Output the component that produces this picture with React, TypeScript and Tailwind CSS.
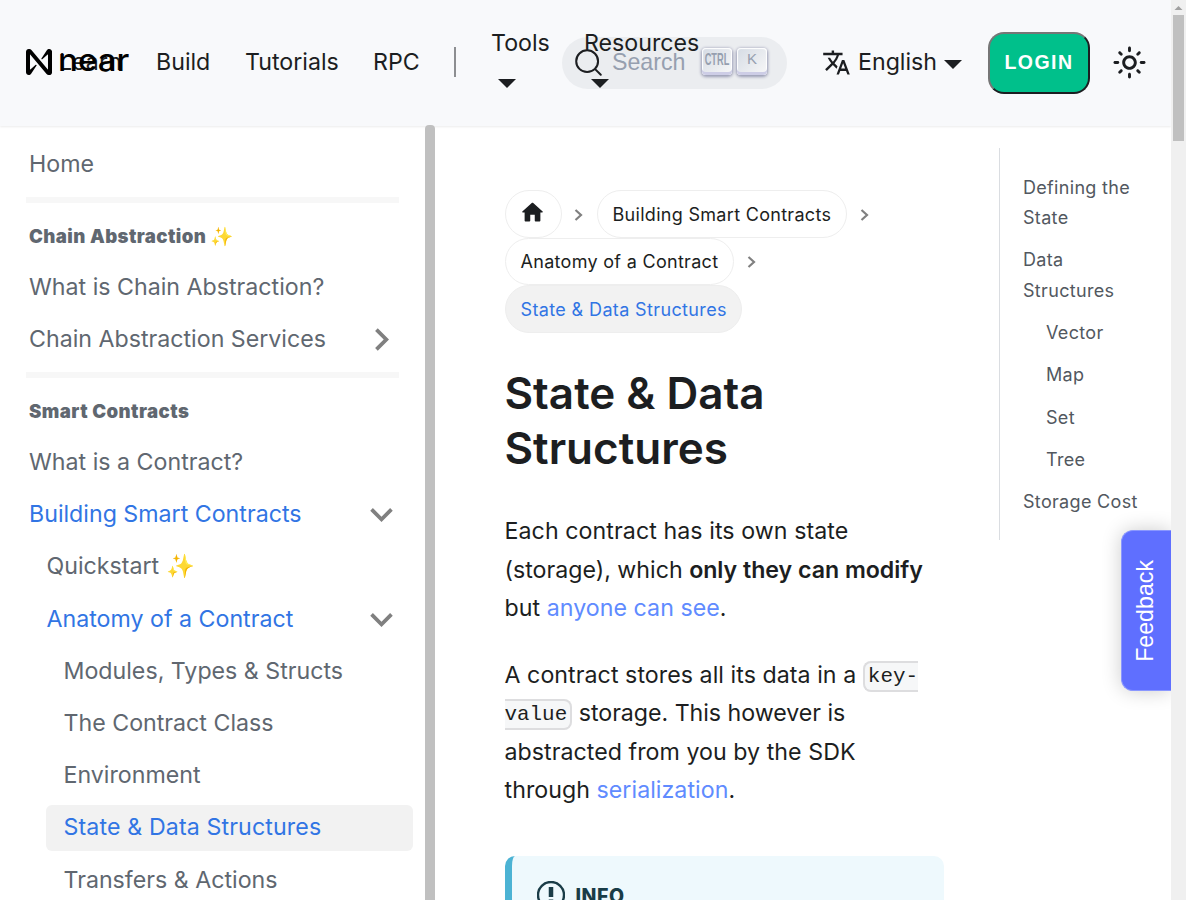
import type { ReactNode } from "react";

function Caret({ className = "" }: { className?: string }) {
  return (
    <svg className={className} width="18" height="9" viewBox="0 0 18 9" fill="#1c1e21">
      <path d="M0 0h18L9 9z" />
    </svg>
  );
}

function Chevron({ down = false }: { down?: boolean }) {
  return (
    <svg className={down ? "shrink-0 rotate-90" : "shrink-0"} width="45" height="45" viewBox="0 0 24 24" fill="#808080">
      <path d="M8.59 16.59 13.17 12 8.59 7.41 10 6l6 6-6 6z" />
    </svg>
  );
}

function NearMark() {
  return (
    <svg className="shrink-0" width="26" height="26" viewBox="0 0 90 90" fill="#000">
      <path d="M72.2 4.6 53.4 32.5c-1.3 1.9 1.2 4.2 3 2.6L74.9 19c.5-.4 1.2-.1 1.2.6v50.3c0 .7-.9 1-1.3.5l-56-67C17 1.2 14.4 0 11.5 0h-2C4.3 0 0 4.3 0 9.6v70.8C0 85.7 4.3 90 9.6 90c3.3 0 6.4-1.7 8.2-4.6l18.8-27.9c1.3-1.9-1.2-4.2-3-2.6l-18.5 16c-.5.4-1.2.1-1.2-.6V20.1c0-.7.9-1 1.3-.5l56 67c1.8 2.2 4.5 3.4 7.3 3.4h2c5.3 0 9.6-4.3 9.6-9.6V9.6c0-5.3-4.3-9.6-9.6-9.6-3.4 0-6.5 1.7-8.3 4.6z" />
    </svg>
  );
}

function Key({ children }: { children: ReactNode }) {
  return (
    <span className="flex h-[27px] w-[30px] items-center justify-center rounded-[4px] bg-[linear-gradient(-225deg,#d5dbe4,#f8f8f8)] pb-[3px] text-[#969faf] shadow-[inset_0_-3px_0_0_#cdcde6,inset_0_0_1px_1px_#fff,0_1px_3px_1px_rgba(30,35,90,0.4)]">
      {children}
    </span>
  );
}

function Header() {
  return (
    <header className="relative z-10 flex h-[126px] shrink-0 items-center bg-[#f8f9fb] pb-[2px] text-[23.2px] leading-[38px] text-[#1c1e21] shadow-[0_1px_2px_0_rgba(0,0,0,0.08)]">
      <div className="ml-[26px] flex w-[130px] items-center">
        <NearMark />
        <span className="relative ml-[6px] w-[98px]">
          <span className="block pl-[1px]">Learn</span>
          <span className="absolute -top-[2px] left-0 origin-left scale-x-[1.05] text-[31.5px] font-medium text-black">near</span>
        </span>
      </div>
      <a className="w-[89px] shrink-0">Build</a>
      <a className="w-[128px] shrink-0">Tutorials</a>
      <a className="w-[81px] shrink-0">RPC</a>
      <span className="h-[30px] w-[2px] shrink-0 bg-[#8d8e91]" />
      <a className="relative z-10 mt-[4px] ml-[35px] flex h-[80px] w-[93px] shrink-0 flex-col">
        Tools
        <Caret className="mt-[17px] ml-[7px]" />
      </a>
      <a className="relative z-10 mt-[4px] flex h-[80px] w-[116px] shrink-0 flex-col">
        Resources
        <Caret className="mt-[17px] ml-[7px]" />
      </a>
      <button className="mt-[2px] -ml-[138px] flex h-[52px] w-[225px] shrink-0 items-center rounded-full bg-[#ebedf0] pb-[2px] pl-[12px] font-['Liberation_Sans']">
        <svg width="29" height="29" viewBox="0 0 20 20" fill="none" stroke="#1c1e21" strokeWidth="1.4">
          <path d="M14.386 14.386l4.0877 4.0877-4.0877-4.0877c-2.9418 2.9419-7.7115 2.9419-10.6533 0-2.9419-2.9418-2.9419-7.7115 0-10.6533 2.9418-2.9419 7.7115-2.9419 10.6533 0 2.9419 2.9418 2.9419 7.7115 0 10.6533z" strokeLinecap="round" strokeLinejoin="round" />
        </svg>
        <span className="ml-[9px] w-[90px] text-left text-[#969faf]">Search</span>
        <span className="-mt-[2px] flex gap-[5px]">
          <Key><span className="-mt-[2px] scale-x-[0.56] text-[16.500px] font-bold">CTRL</span></Key>
          <Key><span className="-mt-[2px] text-[15px]">K</span></Key>
        </span>
      </button>
      <a className="ml-[35px] flex shrink-0 items-center">
        <svg width="29" height="29" viewBox="0 0 24 24" fill="#1c1e21">
          <path d="M12.87 15.07l-2.54-2.51.03-.03c1.74-1.94 2.98-4.17 3.71-6.53H17V4h-7V2H8v2H1v1.99h11.17C11.5 7.92 10.44 9.75 9 11.35 8.07 10.32 7.3 9.19 6.69 8h-2c.73 1.63 1.73 3.17 2.98 4.56l-5.09 5.02L4 19l5-5 3.11 3.11.76-2.04zM18.5 10h-2L12 22h2l1.12-3h4.75L21 22h2l-4.5-12zm-2.62 7l1.62-4.33L19.12 17h-3.24z" />
        </svg>
        <span className="ml-[7px] w-[86px]">English</span>
        <Caret className="mt-[4px]" />
      </a>
      <button className="mt-[2px] ml-[26px] h-[62px] w-[102px] shrink-0 rounded-[16px] border-2 border-t-[#767676] border-r-[#1c1e21] border-b-[#1c1e21] border-l-[#767676] bg-[#00c08b] pb-[2px] font-['Liberation_Sans'] text-[19.5px] font-bold tracking-[1.5px] text-white">LOGIN</button>
      <svg className="ml-[22px] shrink-0" width="35" height="35" viewBox="0 0 24 24" fill="#1c1e21">
        <path d="M12,9c1.65,0,3,1.35,3,3s-1.35,3-3,3s-3-1.35-3-3S10.35,9,12,9 M12,7c-2.76,0-5,2.24-5,5s2.24,5,5,5s5-2.24,5-5 S14.76,7,12,7L12,7z M2,13l2,0c0.55,0,1-0.45,1-1s-0.45-1-1-1l-2,0c-0.55,0-1,0.45-1,1S1.45,13,2,13z M20,13l2,0c0.55,0,1-0.45,1-1 s-0.45-1-1-1l-2,0c-0.55,0-1,0.45-1,1S19.45,13,20,13z M11,2v2c0,0.55,0.45,1,1,1s1-0.45,1-1V2c0-0.55-0.45-1-1-1S11,1.45,11,2z M11,20v2c0,0.55,0.45,1,1,1s1-0.45,1-1v-2c0-0.55-0.45-1-1-1C11.45,19,11,19.45,11,20z M5.99,4.58c-0.39-0.39-1.03-0.39-1.41,0 c-0.39,0.39-0.39,1.03,0,1.41l1.06,1.06c0.39,0.39,1.03,0.39,1.41,0s0.39-1.03,0-1.41L5.99,4.58z M18.36,16.95 c-0.39-0.39-1.03-0.39-1.41,0c-0.39,0.39-0.39,1.03,0,1.41l1.06,1.06c0.39,0.39,1.03,0.39,1.41,0c0.39-0.39,0.39-1.03,0-1.41 L18.36,16.95z M19.42,5.99c0.39-0.39,0.39-1.03,0-1.41c-0.39-0.39-1.03-0.39-1.41,0l-1.06,1.06c-0.39,0.39-0.39,1.03,0,1.41 s1.03,0.39,1.41,0L19.42,5.99z M7.05,18.36c0.39-0.39,0.39-1.03,0-1.41c-0.39-0.39-1.03-0.39-1.41,0l-1.06,1.06 c-0.39,0.39-0.39,1.03,0,1.41s1.03,0.39,1.41,0L7.05,18.36z" />
      </svg>
    </header>
  );
}

type RowProps = { children: ReactNode; level?: number; active?: boolean; icon?: "right" | "down"; selected?: boolean };

function Row({ children, level = 0, active, icon, selected }: RowProps) {
  const indent = level === 0 ? "pl-[29px]" : level === 1 ? "pl-[46.5px]" : selected ? "ml-[46px] pl-[17.5px]" : "pl-[63.5px]";
  return (
    <li className={`mb-[5.9px] flex h-[46.3px] items-center justify-between rounded-[6px] pr-[8.5px] ${indent} ${active ? "text-[#3175e4]" : "text-[#606770]"} ${selected ? "-mr-[1px] bg-[#f2f2f2] tracking-[0.12px]" : ""}`}>
      <span className="whitespace-nowrap">{children}</span>
      {icon && <Chevron down={icon === "down"} />}
    </li>
  );
}

function Divider() {
  return <li className="mr-[13.5px] ml-[26px] h-[6px] bg-[#f7f7f7]" />;
}

function Heading({ children }: { children: ReactNode }) {
  return <li className="flex h-[61px] items-center pt-[5px] pl-[29px] text-[18.6px] font-black tracking-[0.43px] text-[#606770]">{children}</li>;
}

function Sidebar() {
  return (
    <aside className="relative z-20 flex h-full w-[435px] shrink-0 overflow-hidden">
      <ul className="w-[425px] pt-[16px] pr-[13px] text-[23.2px] leading-[29px]">
        <li className="mb-[10px] flex h-[46px] items-center pl-[29px] text-[#606770]">Home</li>
        <Divider />
        <Heading>Chain Abstraction ✨</Heading>
        <Row>What is Chain Abstraction?</Row>
        <Row icon="right">Chain Abstraction Services</Row>
        <li className="h-[4px]" />
        <Divider />
        <Heading>Smart Contracts</Heading>
        <Row>What is a Contract?</Row>
        <Row active icon="down">Building Smart Contracts</Row>
        <Row level={1}>Quickstart ✨</Row>
        <Row level={1} active icon="down">Anatomy of a Contract</Row>
        <Row level={2}>Modules, Types &amp; Structs</Row>
        <Row level={2}>The Contract Class</Row>
        <Row level={2}>Environment</Row>
        <Row level={2} active selected>State &amp; Data Structures</Row>
        <Row level={2}>Transfers &amp; Actions</Row>
      </ul>
      <div className="w-[10px] rounded-t-[4px] bg-[#c0c0c0]" />
    </aside>
  );
}

function Separator() {
  return (
    <svg width="9" height="12" viewBox="0 0 9 12" fill="none" stroke="#808080" strokeWidth="2.2">
      <path d="M1.5 1 7 6l-5.5 5" />
    </svg>
  );
}

function Crumbs() {
  const pill = "flex h-[47.5px] items-center rounded-full border border-[#eeeeee] pt-[2px] pl-[14.5px] pr-[14.5px]";
  return (
    <nav className="flex flex-col text-[18px] tracking-[0.3px]">
      <div className="flex items-center">
        <a className={`${pill} w-[57px] justify-center`}>
          <svg className="-mt-[4px] -ml-[2px] shrink-0" width="27" height="27" viewBox="0 0 24 24" fill="#1c1e21">
            <path d="M10 19v-5h4v5c0 .55.45 1 1 1h3c.55 0 1-.45 1-1v-7h1.7c.46 0 .68-.57.33-.87L12.67 3.6c-.38-.34-.96-.34-1.34 0l-8.36 7.53c-.34.3-.13.87.33.87H5v7c0 .55.45 1 1 1h3c.55 0 1-.45 1-1z" />
          </svg>
        </a>
        <span className="mt-[2px] mr-[14px] ml-[12px]"><Separator /></span>
        <a className={pill}>Building Smart Contracts</a>
        <span className="mt-[2px] ml-[13px]"><Separator /></span>
      </div>
      <div className="flex items-center">
        <a className={pill}>Anatomy of a Contract</a>
        <span className="mt-[2px] ml-[13px]"><Separator /></span>
      </div>
      <div className="flex"><a className={`${pill} bg-[#f2f2f2] tracking-[0.37px] text-[#3175e4]`}>State &amp; Data Structures</a></div>
    </nav>
  );
}

function Article() {
  return (
    <article className="ml-[70px] w-[439px] shrink-0 pt-[65px] text-[23.2px] leading-[38.4px] text-[#1c1e21]">
      <Crumbs />
      <h1 className="mt-[33px] -ml-[0.5px] text-[44px] leading-[55px] font-semibold">State &amp; Data<br />Structures</h1>
      <p className="mt-[36.8px] -ml-[0.5px] whitespace-nowrap">
        <span className="tracking-[0.07px]">Each contract has its own state</span><br />(storage), which <strong className="font-semibold tracking-[-0.04px]">only they can modify</strong><br /><span className="tracking-[0.04px]">but <a className="text-[#608bff]">anyone can see</a>.</span>
      </p>
      <p className="mt-[28.4px] -ml-[0.5px] whitespace-nowrap">
        <span className="tracking-[0.05px]">A contract stores all its data in a </span>
        <code className="rounded-[8px] border-2 border-[#dddddf] bg-[#f6f7f8] px-[3px] pt-[3px] pb-[1px] font-['Liberation_Mono'] text-[20.9px] leading-none"><span className="relative -top-px">key-</span><br /><span className="relative -top-px">value</span></code>{" "}
        <span className="tracking-[-0.03px]">storage. This however is</span><br /><span className="tracking-[0.04px]">abstracted from you by the SDK</span><br /><span className="tracking-[0.04px]">through <a className="text-[#608bff]">serialization</a>.</span>
      </p>
      <div className="mt-[46.4px] flex h-[120px] rounded-[10px] border-l-[7px] border-[#4cb3d4] bg-[#eef9fd] pt-[25px] pl-[25px] text-[#193c47]">
        <svg width="28" height="28" viewBox="0 0 28 28" fill="none" stroke="#193c47">
          <circle cx="14" cy="14" r="13" strokeWidth="2.4" />
          <path d="M14 6v10M14 18.5v4" strokeWidth="4.5" />
        </svg>
        <span className="ml-[10.5px] text-[19.5px] leading-[30px] font-extrabold tracking-[0.5px]">INFO</span>
      </div>
    </article>
  );
}

function Contents() {
  return (
    <ul className="mt-[23px] ml-[55px] flex h-[392px] w-[172px] shrink-0 flex-col gap-[11.7px] border-l border-[#dadde1] pt-[24.8px] pl-[23px] text-[18px] leading-[30.5px] tracking-[0.32px] text-[#525860]">
      <li>Defining the<br />State</li>
      <li>Data<br />Structures</li>
      <li className="pl-[23px]">Vector</li>
      <li className="pl-[23px]">Map</li>
      <li className="pl-[23px]">Set</li>
      <li className="pl-[23px]">Tree</li>
      <li className="whitespace-nowrap">Storage Cost</li>
    </ul>
  );
}

export default function App() {
  return (
    <div className="relative flex h-[900px] w-[1186px] overflow-hidden bg-white font-[Inter,sans-serif]">
      <div className="flex w-[1171px] shrink-0 flex-col">
        <Header />
        <main className="-mt-px flex h-[775px] items-start">
          <Sidebar />
          <Article />
          <Contents />
        </main>
      </div>
      <div className="z-20 flex w-[15px] shrink-0 flex-col items-center bg-[#f0f0f0]">
        <svg className="my-[3px] shrink-0" width="9" height="9" viewBox="0 0 9 9" fill="#a0a0a0"><path d="M.5 7 4.5 3l4 4z" /></svg>
        <div className="h-[126px] w-[11px] bg-[#c0c0c0]" />
      </div>
      <div className="absolute top-[530px] right-[15px] flex h-[161px] w-[50px] items-center justify-center rounded-l-[12px] border border-r-0 border-[#8a97ff] bg-[#5f6fff] pr-[2px] shadow-[0_0_20px_rgba(0,0,0,0.2)]">
        <span className="rotate-180 font-['Liberation_Sans'] text-[23.2px] text-white [writing-mode:vertical-rl]">Feedback</span>
      </div>
    </div>
  );
}
